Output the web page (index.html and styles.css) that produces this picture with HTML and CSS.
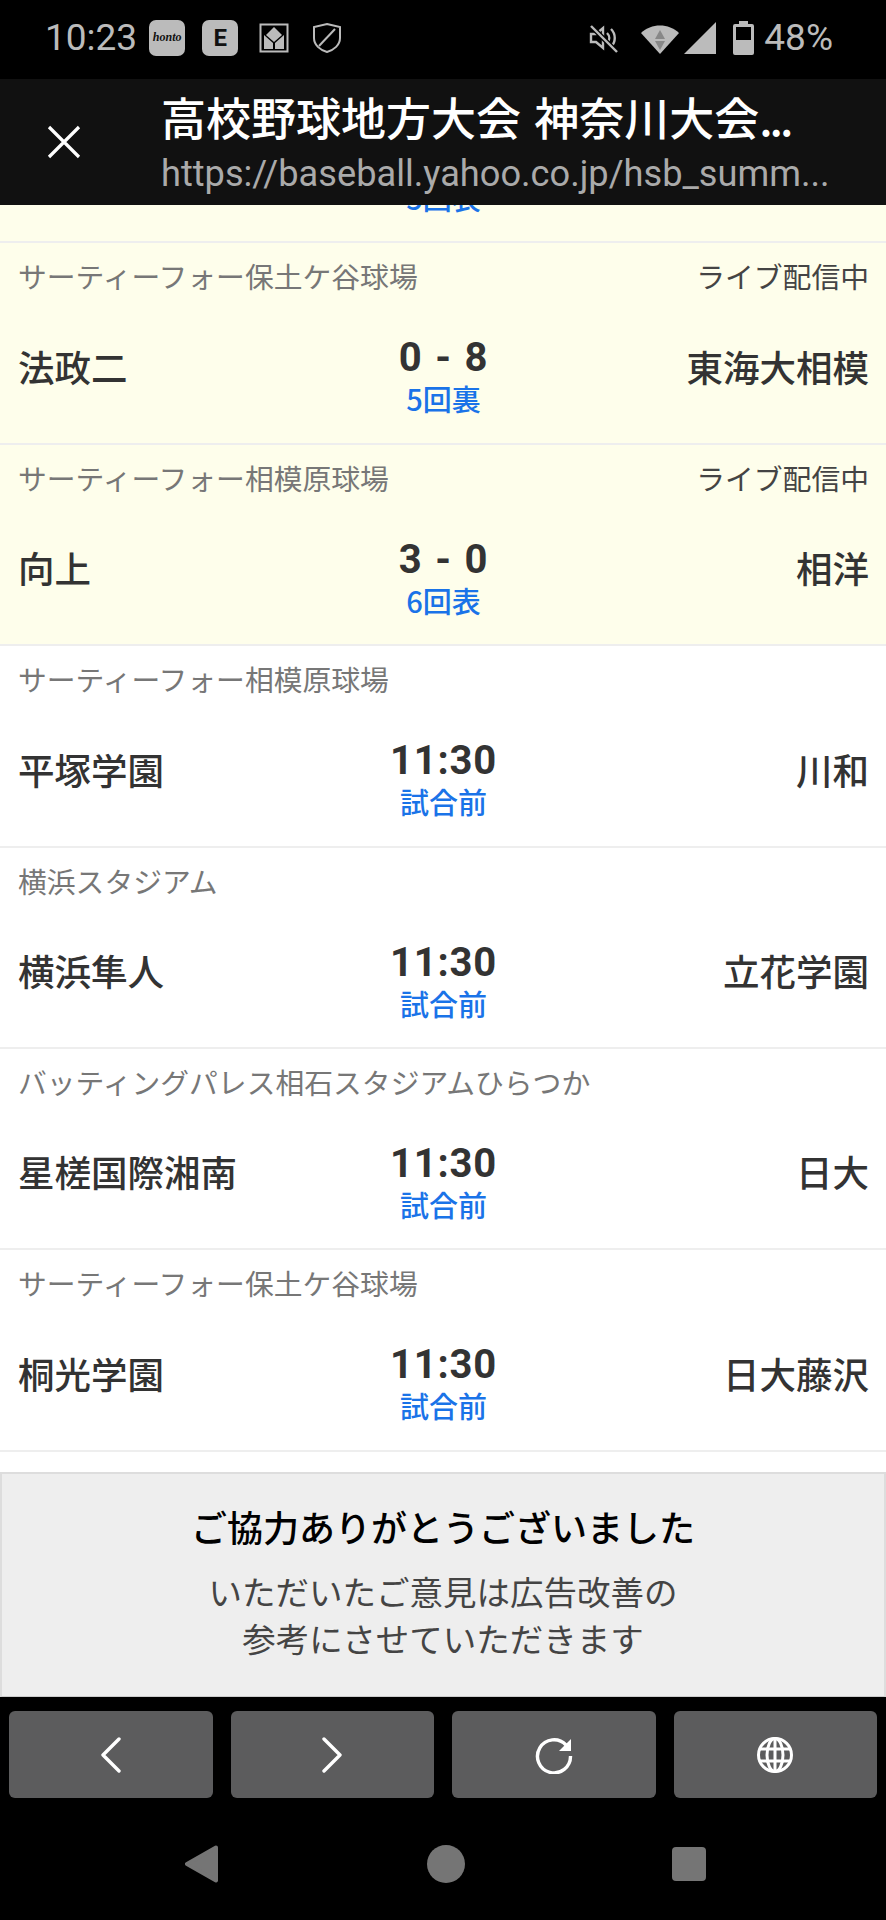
FILE: index.html
```html
<!DOCTYPE html>
<html lang="ja">
<head>
  <meta charset="UTF-8" />
  <meta name="viewport" content="width=device-width, initial-scale=1.0"/>
  <title>高校野球地方大会 神奈川大会</title>
  <link rel="stylesheet" href="styles.css">
</head>
<body>
  <div class="status">
    <span class="time">10:23</span>
    <span class="app-badge honto">honto</span>
    <span class="app-badge letter">E</span>
    <svg class="ic-house" width="30" height="30" viewBox="0 0 30 30"><path d="M1.500 1.500h27v27h-27z" fill="none" stroke="#bbb" stroke-width="2"/><path d="M15 4l8 8-8 7-8-7z" fill="#bbb"/><path d="M5 12l9 8v6H5zM25 12l-9 8v6h9z" fill="#bbb"/></svg>
    <svg class="ic-shield" width="30" height="32" viewBox="0 0 30 32"><path d="M15 2l13 3v11c0 7-6 12-13 14C8 28 2 23 2 16V5z" fill="none" stroke="#bbb" stroke-width="2"/><path d="M7 24L23 7" stroke="#bbb" stroke-width="2"/></svg>
    <div class="status-right">
      <svg width="30" height="30" viewBox="0 0 30 30"><path d="M2 11h5l7-6v20l-7-6H2z" fill="none" stroke="#bbb" stroke-width="2.400"/><path d="M18 10c3 3 3 7 0 10M22 6c5 5 5 13 0 18" fill="none" stroke="#bbb" stroke-width="2.400"/><path d="M2 3l26 26" stroke="#000" stroke-width="5"/><path d="M2 3l26 26" stroke="#bbb" stroke-width="2.400"/></svg>
      <svg class="ic-wifi" width="40" height="32" viewBox="0 0 40 32"><path d="M1 11C11 1 29 1 39 11L20 32z" fill="#bbb"/><path d="M20 8l5 9H15z" fill="#888"/><path d="M20 28l-5-9h10z" fill="#888"/></svg>
      <svg class="ic-signal" width="32" height="32" viewBox="0 0 32 32"><path d="M32 0v32H0z" fill="#bbb"/></svg>
      <svg class="ic-battery" width="21" height="34" viewBox="0 0 21 34"><path d="M6 0h9v3h4a2 2 0 0 1 2 2v27a2 2 0 0 1-2 2H2a2 2 0 0 1-2-2V5a2 2 0 0 1 2-2h4z" fill="#bbb"/><rect x="3" y="6" width="15" height="13" fill="#000"/></svg>
      <span class="batt">48%</span>
    </div>
  </div>

  <header class="bar">
    <svg class="close" width="34" height="34" viewBox="0 0 34 34"><path d="M2 2l30 30M32 2L2 32" stroke="#fff" stroke-width="3.200" fill="none"/></svg>
    <div class="bar-text">
      <div class="bar-title">高校野球地方大会 神奈川大会<span class="dots">...</span></div>
      <div class="bar-url">https://baseball.yahoo.co.jp/hsb_summ...</div>
    </div>
  </header>

  <main class="list">
    <div class="game live first">
      <div class="game-head"><span>サーティーフォー保土ケ谷球場</span><span class="stream">ライブ配信中</span></div>
      <div class="game-body"><span class="team">慶應義塾</span><div class="mid"><div class="score">2 - 1</div><div class="inning">5回表</div></div><span class="team right">鶴見大付</span></div>
    </div>
    <div class="game live">
      <div class="game-head"><span>サーティーフォー保土ケ谷球場</span><span class="stream">ライブ配信中</span></div>
      <div class="game-body"><span class="team">法政二</span><div class="mid"><div class="score">0 - 8</div><div class="inning">5回裏</div></div><span class="team right">東海大相模</span></div>
    </div>
    <div class="game live">
      <div class="game-head"><span>サーティーフォー相模原球場</span><span class="stream">ライブ配信中</span></div>
      <div class="game-body"><span class="team">向上</span><div class="mid"><div class="score">3 - 0</div><div class="inning">6回表</div></div><span class="team right">相洋</span></div>
    </div>
    <div class="game">
      <div class="game-head"><span>サーティーフォー相模原球場</span></div>
      <div class="game-body"><span class="team">平塚学園</span><div class="mid"><div class="score">11:30</div><div class="inning">試合前</div></div><span class="team right">川和</span></div>
    </div>
    <div class="game">
      <div class="game-head"><span>横浜スタジアム</span></div>
      <div class="game-body"><span class="team">横浜隼人</span><div class="mid"><div class="score">11:30</div><div class="inning">試合前</div></div><span class="team right">立花学園</span></div>
    </div>
    <div class="game">
      <div class="game-head"><span>バッティングパレス相石スタジアムひらつか</span></div>
      <div class="game-body"><span class="team">星槎国際湘南</span><div class="mid"><div class="score">11:30</div><div class="inning">試合前</div></div><span class="team right">日大</span></div>
    </div>
    <div class="game">
      <div class="game-head"><span>サーティーフォー保土ケ谷球場</span></div>
      <div class="game-body"><span class="team">桐光学園</span><div class="mid"><div class="score">11:30</div><div class="inning">試合前</div></div><span class="team right">日大藤沢</span></div>
    </div>
    <div class="game">
      <div class="game-head"><span>バッティングパレス相石スタジアム</span><span class="stream">試合詳細</span></div>
    </div>
  </main>

  <section class="thanks">
    <h2>ご協力ありがとうございました</h2>
    <p>いただいたご意見は広告改善の<br>参考にさせていただきます</p>
  </section>

  <nav class="tools">
    <button class="tool"><svg width="22" height="36" viewBox="0 0 22 36"><path d="M19 2L3 18l16 16" fill="none" stroke="#fff" stroke-width="3.400" stroke-linecap="round" stroke-linejoin="round"/></svg></button>
    <button class="tool"><svg width="22" height="36" viewBox="0 0 22 36"><path d="M3 2l16 16L3 34" fill="none" stroke="#fff" stroke-width="3.400" stroke-linecap="round" stroke-linejoin="round"/></svg></button>
    <button class="tool"><svg width="38" height="38" viewBox="0 0 38 38"><path d="M31 9A16.500 16.500 0 1 0 35.500 20" fill="none" stroke="#fff" stroke-width="3.400"/><path d="M36 3v12H24z" fill="#fff"/></svg></button>
    <button class="tool"><svg width="38" height="38" viewBox="0 0 38 38"><g fill="none" stroke="#fff" stroke-width="3"><circle cx="19" cy="19" r="16.500"/><ellipse cx="19" cy="19" rx="8" ry="16.500"/><path d="M19 2v34M3 13h32M3 25h32"/></g></svg></button>
  </nav>

  <div class="sysnav">
    <svg width="34" height="38" viewBox="0 0 34 38"><path d="M31 2.500L2 19l29 16.500z" fill="#757575" stroke="#757575" stroke-width="4" stroke-linejoin="round"/></svg>
    <span class="dot"></span>
    <span class="square"></span>
  </div>
</body>
</html>
```

FILE: styles.css
```css
* { box-sizing: border-box; }
body { margin: 0; width: 886px; height: 1920px; overflow: hidden; display: flex; flex-direction: column; background: #000; font-family: "Noto Sans CJK JP", sans-serif; }

.status { height: 79px; flex: none; display: flex; align-items: center; padding: 0 53px 4px 45px; color: #bbb; font-family: Roboto, sans-serif; font-size: 37px; }
.time { margin-right: 12px; }
.app-badge { width: 36px; height: 36px; border-radius: 7px; background: #bbb; color: #111; display: flex; align-items: center; justify-content: center; font-weight: 700; }
.honto { font-family: "Liberation Serif", serif; font-style: italic; font-size: 12px; margin-right: 17px; }
.letter { font-size: 24px; margin-right: 21px; }
.ic-house { margin-right: 23px; }
.status-right { margin-left: auto; display: flex; align-items: center; }
.ic-wifi { margin-left: 21px; }
.ic-signal { margin-left: 4px; }
.ic-battery { margin-left: 17px; }
.batt { margin-left: 10px; }

.bar { height: 126px; flex: none; background: #111; display: flex; align-items: center; padding-left: 47px; color: #fff; position: relative; z-index: 1; }
.close { flex: none; margin-right: 80px; }
.bar-title { font-size: 45px; font-weight: 500; line-height: 60px; word-spacing: 3px; white-space: nowrap; }
.dots { letter-spacing: -3px; }
.bar-url { font-family: Roboto, sans-serif; font-size: 36.2px; line-height: 48px; margin-top: 3px; color: #aaa; white-space: nowrap; }

.list { flex: 1; min-height: 0; overflow: hidden; background: #fff; }
.game { height: 201.4px; padding: 13px 17px 0 18px; border-bottom: 2px solid #eee; }
.first { margin-top: -163px; }
.live { background: #fefeeb; }
.game-head { display: flex; justify-content: space-between; font-size: 28.8px; line-height: 40px; color: #777; }
.stream { color: #444; }
.game-body { display: grid; grid-template-columns: 1fr auto 1fr; align-items: center; margin-top: 40px; }
.team { font-size: 36.5px; font-weight: 500; color: #333; white-space: nowrap; padding-bottom: 20px; }
.team.right { text-align: right; }
.mid { text-align: center; }
.score { font-family: Roboto, sans-serif; font-size: 40px; font-weight: 700; line-height: 44px; color: #333; letter-spacing: 0.8px; word-spacing: 2px; }
.inning { font-size: 29px; font-weight: 500; line-height: 36px; color: #1a73e8; }

.thanks { height: 225px; flex: none; background: #eee; border-top: 2px solid #ddd; border-left: 2px solid #ddd; border-right: 2px solid #ddd; border-bottom: 1px solid #ccc; text-align: center; padding-top: 27px; }
.thanks h2 { margin: 0; font-size: 36px; font-weight: 500; line-height: 50px; color: #000; }
.thanks p { margin: 16px 0 0; font-size: 33.5px; line-height: 47px; color: #444; }

.tools { height: 101px; flex: none; display: flex; gap: 18px; padding: 14px 9px 0 9px; }
.tool { flex: 1; height: 87px; border: 0; border-radius: 6px; background: #5c5c5d; padding: 0; display: flex; align-items: center; justify-content: center; }

.sysnav { height: 122px; flex: none; display: grid; grid-template-columns: repeat(3, 243.5px); justify-content: center; justify-items: center; align-items: center; padding: 9px 0 0 5px; }
.dot { width: 38px; height: 38px; border-radius: 50%; background: #757575; }
.square { width: 34px; height: 34px; border-radius: 4px; background: #757575; }
```
